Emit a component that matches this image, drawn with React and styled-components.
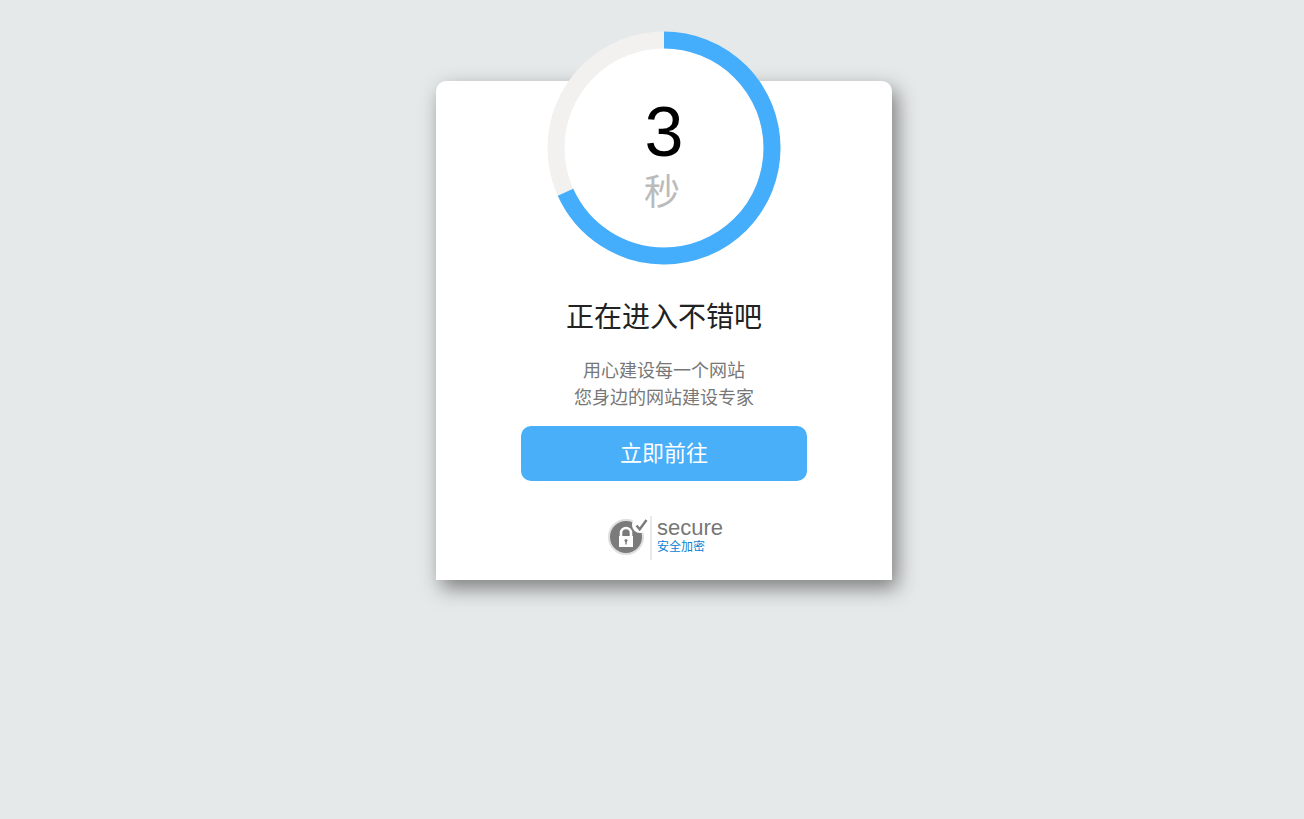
import React from 'react';
import styled, { createGlobalStyle } from 'styled-components';

const RADIUS = 108;
const LENGTH = 2 * Math.PI * RADIUS;

function Countdown({ seconds, progress }) {
    return (
        <Dial>
            <Ring viewBox="0 0 234 234" aria-hidden="true">
                <circle cx="117" cy="117" r={RADIUS} fill="#fff" stroke="#f2f1f0" strokeWidth="17" />
                <circle
                    cx="117"
                    cy="117"
                    r={RADIUS}
                    fill="none"
                    stroke="#44aefc"
                    strokeWidth="17"
                    strokeDasharray={`${LENGTH * progress} ${LENGTH}`}
                    transform="rotate(-90 117 117)"
                />
            </Ring>
            <Seconds>{seconds}</Seconds>
            <Unit>秒</Unit>
        </Dial>
    );
}

function SecureIcon() {
    return (
        <svg width="42" height="42" viewBox="0 0 42 42" aria-hidden="true">
            <circle cx="19" cy="20" r="17" fill="#7b7b7b" stroke="#dedede" strokeWidth="2" />
            <circle cx="33" cy="8" r="8" fill="#fff" />
            <path d="M29.5 8.5l3.2 3.8L39.5 3" fill="none" stroke="#7b7b7b" strokeWidth="2.4" />
            <path d="M14 20v-4a5 5 0 0 1 10 0v4" fill="none" stroke="#fff" strokeWidth="2.6" />
            <rect x="12" y="19" width="14" height="11" fill="#fff" />
            <circle cx="19" cy="23.5" r="1.5" fill="#7b7b7b" />
            <path d="M19 23.5v4" stroke="#7b7b7b" strokeWidth="1.4" />
        </svg>
    );
}

export default function App() {
    return (
        <Page>
            <GlobalStyle />
            <Card>
                <Countdown seconds={3} progress={0.682} />
                <Title>正在进入不错吧</Title>
                <Description>
                    用心建设每一个网站
                    <br />
                    您身边的网站建设专家
                </Description>
                <GoButton type="button">立即前往</GoButton>
                <Secure>
                    <SecureIcon />
                    <SecureText>
                        <span className="name">secure</span>
                        <span className="note">安全加密</span>
                    </SecureText>
                </Secure>
            </Card>
        </Page>
    );
}

const GlobalStyle = createGlobalStyle`
  body {
    margin: 0;
    background: #e5e9ea;
    font-family: "Liberation Sans", "Noto Sans CJK SC", sans-serif;
  }
`;

const Page = styled.main`
  display: flex;
  justify-content: center;
  padding: 81px 16px 40px 40px;
`;

const Card = styled.section`
  box-sizing: border-box;
  display: flex;
  flex-direction: column;
  align-items: center;
  width: 100%;
  max-width: 456px;
  padding-bottom: 20px;
  border-radius: 10px 10px 0 0;
  background: #fff;
  box-shadow: 5px 8px 20px #7c7c7c;
`;

const Dial = styled.div`
  display: grid;
  grid-template-rows: 137px 1fr;
  justify-items: center;
  width: 234px;
  height: 234px;
  margin-top: -50px;
`;

const Ring = styled.svg`
  grid-area: 1 / 1 / 3 / 2;
  width: 234px;
  height: 234px;
`;

const Seconds = styled.span`
  grid-area: 1 / 1;
  align-self: end;
  font-size: 70px;
  line-height: 72px;
  color: #000;
`;

const Unit = styled.span`
  grid-area: 2 / 1;
  padding-right: 4px;
  font-size: 36px;
  line-height: 50px;
  color: #bbb;
`;

const Title = styled.h1`
  margin: 33px 0 20px;
  font-size: 28px;
  font-weight: 400;
  line-height: 40px;
  color: #222;
`;

const Description = styled.p`
  margin: 0 0 14px;
  font-size: 18px;
  line-height: 27px;
  text-align: center;
  color: #777;
`;

const GoButton = styled.button`
  width: 286px;
  height: 55px;
  padding: 0 0 5px;
  border: 0;
  border-radius: 10px;
  background: #4aaff9;
  color: #fff;
  font-family: inherit;
  font-size: 22px;
  cursor: pointer;
`;

const Secure = styled.div`
  display: flex;
  align-items: center;
  margin-top: 35px;
  padding-left: 2px;
`;

const SecureText = styled.div`
  display: flex;
  flex-direction: column;
  height: 44px;
  margin-left: 1px;
  padding-left: 5px;
  border-left: 2px solid #e8e8e8;
  .name {
    font-size: 22px;
    line-height: 23px;
    color: #777;
  }
  .note {
    font-size: 12px;
    line-height: 16px;
    color: #0a82d2;
  }
`;
